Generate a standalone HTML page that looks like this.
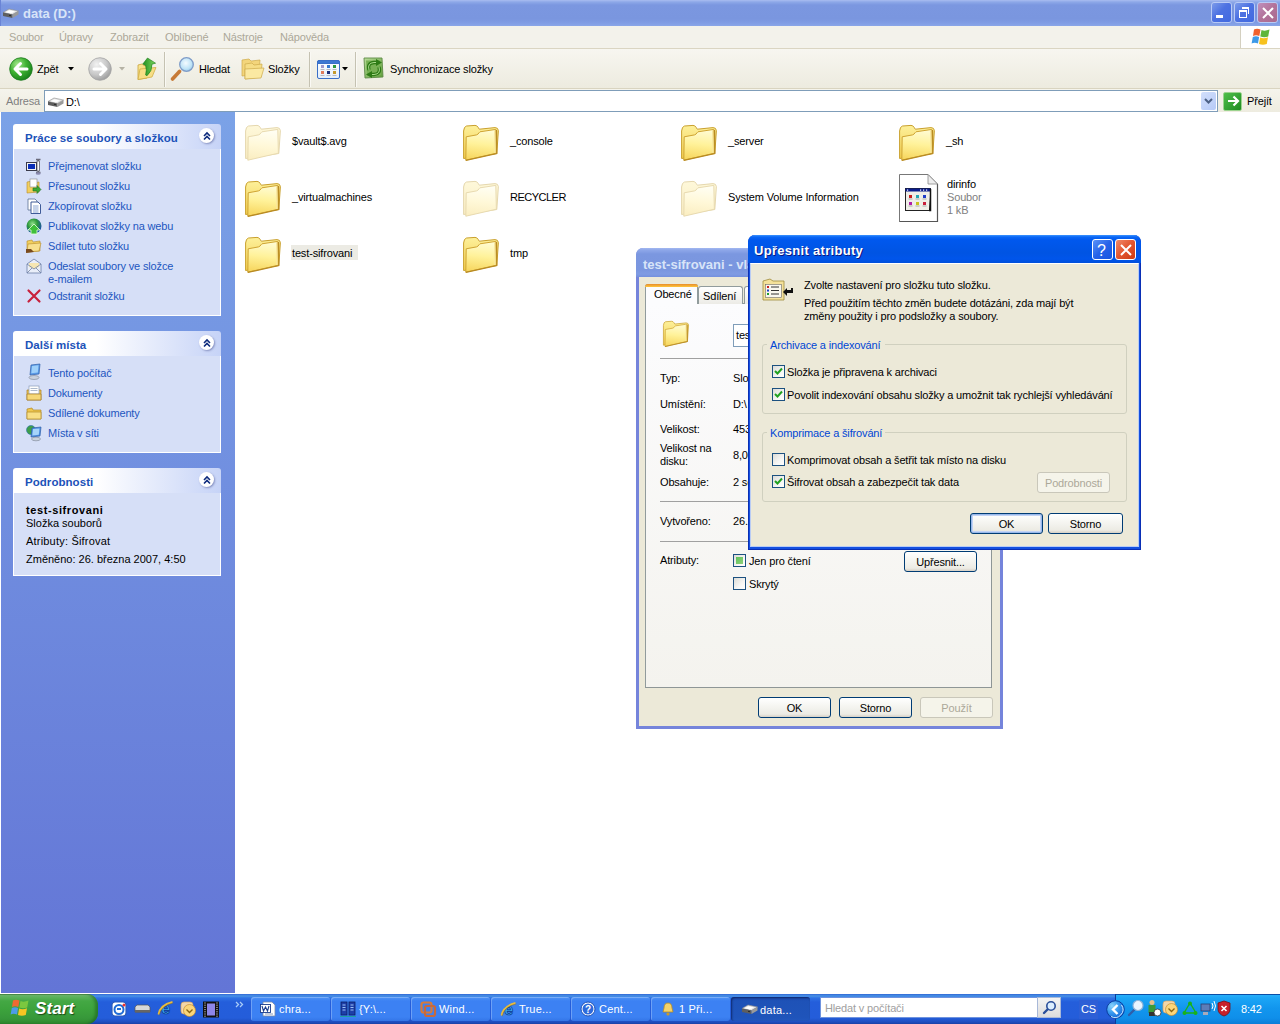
<!DOCTYPE html>
<html><head><meta charset="utf-8">
<style>
*{box-sizing:border-box;margin:0;padding:0}
html,body{width:1280px;height:1024px;overflow:hidden;background:#fff;font-family:"Liberation Sans",sans-serif;font-size:11px;letter-spacing:-0.15px;color:#000}
.a{position:absolute}
.t{position:absolute;white-space:nowrap;line-height:13px}
svg.i{position:absolute;overflow:visible}
#title{left:0;top:0;width:1280px;height:26px;background:linear-gradient(#A9BDF0 0,#8DA8E8 2px,#7B97E0 5px,#7A96DF 19px,#809DE4 23px,#8AA6E8 26px)}
#title .tx{left:23px;top:7px;font-size:13px;font-weight:bold;color:#D8E4F8;letter-spacing:0}
.cb{position:absolute;top:2px;width:21px;height:21px;border:1px solid #B9CBF5;border-radius:3px;background:linear-gradient(135deg,#7C9BEA 0,#4D72E2 45%,#4169E0 100%)}
#menu{left:0;top:26px;width:1280px;height:23px;background:#F3F2EB;border-bottom:1px solid #DAD5C2}
#menu .t{top:5px;color:#ACA899}
#tool{left:0;top:49px;width:1280px;height:40px;background:linear-gradient(#F7F6F0,#EDEBDF);border-bottom:1px solid #D9D4C0}
#addr{left:0;top:89px;width:1280px;height:23px;background:linear-gradient(#F5F4EC,#EEECE0)}
.sep{position:absolute;top:3px;width:2px;height:35px;border-left:1px solid #C5C2B2;border-right:1px solid #FAF9F4}
#side{left:1px;top:112px;width:234px;height:881px;background:linear-gradient(#7BA2E7,#6375D6)}
.panel{position:absolute;left:13px;width:208px;background:#D6DFF7;border:1px solid #fff;border-top:none}
.phead{position:absolute;left:13px;width:208px;height:25px;background:linear-gradient(90deg,#fff 0,#fff 40%,#C6D3F7 100%);border-radius:3px 3px 0 0}
.phead .t{left:12px;top:8px;font-weight:bold;font-size:11.5px;color:#1C52B9;letter-spacing:0.05px}
.chev{position:absolute;left:186px;top:4px;width:15px;height:15px;border-radius:50%;background:#fff;box-shadow:1px 1px 2px rgba(80,90,150,.55)}
.lnk{color:#1D56BF}
.ic{position:absolute;width:16px;height:16px}
#content{left:235px;top:112px;width:1045px;height:882px;background:#fff}
.fname{position:absolute;white-space:nowrap;line-height:13px}
/* dialogs */
.dlg{position:absolute;background:#ECE9D8}
#taskbar{left:0;top:994px;width:1280px;height:30px;background:linear-gradient(#3168D5 0,#4993E6 2px,#2F71E5 4px,#245EDB 8px,#245DDA 24px,#1D4EC0 28px,#1941A5 30px)}
.tbtn{position:absolute;top:997px;height:24px;border-radius:3px;background:linear-gradient(#4F94F6 0,#3C81F3 4px,#3C81F3 20px,#2F6FE0 26px);box-shadow:inset 1px 1px 0 rgba(255,255,255,.25)}
.tbtn .t{color:#fff;top:6px;left:28px;letter-spacing:0.2px}
.btn{position:absolute;height:21px;border:1px solid #003C74;border-radius:3px;background:linear-gradient(#fff 0,#F6F6F2 40%,#ECEBE4 85%,#D6D0C5 100%);text-align:center;line-height:20px}
.chk{position:absolute;width:13px;height:13px;border:1px solid #1C5180;background:linear-gradient(135deg,#DCDCD7 0,#F6F6F4 60%,#fff 100%)}
</style></head><body>

<!-- ============ TITLE BAR ============ -->
<div id="title" class="a">
  <div class="a" style="left:0;top:0;width:1px;height:26px;background:#6A84D6"></div>
  <svg class="i" style="left:2px;top:7px" width="17" height="12" viewBox="0 0 17 12">
    <path d="M1,5.5 L7,2 L16.5,4 L10.5,7.5Z" fill="#E4E4E4" stroke="#8C8C8C" stroke-width=".6"/>
    <path d="M3.5,5.3 L7.5,3.2 L13,4.4 L9,6.6Z" fill="#fff"/>
    <path d="M1,5.5 L10.5,7.5 L10.5,11 L1,9Z" fill="#5E5E5E"/>
    <path d="M10.5,7.5 L16.5,4 L16.5,7.5 L10.5,11Z" fill="#9A9A9A"/>
    <path d="M7,8.3 L9,8.7" stroke="#2A2A2A" stroke-width="1"/>
  </svg>
  <div class="t tx">data (D:)</div>
  <div class="cb" style="left:1211px"><div class="a" style="left:4px;top:12px;width:7px;height:3px;background:#fff"></div></div>
  <div class="cb" style="left:1234px">
    <div class="a" style="left:7px;top:4px;width:7px;height:2px;background:#fff"></div>
    <div class="a" style="left:13px;top:4px;width:1px;height:7px;background:#fff"></div>
    <div class="a" style="left:4px;top:7px;width:8px;height:8px;border:1px solid #fff;border-top-width:2px"></div>
  </div>
  <div class="cb" style="left:1257px;background:linear-gradient(135deg,#C08FBC 0,#B2739A 50%,#A96A8F 100%)">
    <svg class="i" style="left:4px;top:4px" width="12" height="12" viewBox="0 0 12 12"><path d="M1,1 L11,11 M11,1 L1,11" stroke="#fff" stroke-width="2"/></svg>
  </div>
</div>

<!-- ============ MENU ============ -->
<div id="menu" class="a">
  <div class="t" style="left:9px">Soubor</div>
  <div class="t" style="left:59px">Úpravy</div>
  <div class="t" style="left:110px">Zobrazit</div>
  <div class="t" style="left:165px">Oblíbené</div>
  <div class="t" style="left:223px">Nástroje</div>
  <div class="t" style="left:280px">Nápověda</div>
  <div class="a" style="left:1240px;top:0;width:1px;height:22px;background:#D4D0C0"></div>
  <div class="a" style="left:1241px;top:0;width:39px;height:22px;background:#fff"></div>
  <svg class="i" style="left:1251px;top:2px" width="20" height="18" viewBox="0 0 20 18">
    <path d="M3,1.5 Q6,0 9.5,1.5 L8.3,8 Q5,6.5 2,8 Z" fill="#F0612D"/>
    <path d="M10.5,2 Q14,3.5 18.5,1.5 L17.2,8.5 Q13.5,10 9.3,8.5 Z" fill="#5FB63A"/>
    <path d="M1.8,9 Q5,7.5 8.1,9 L7,15.5 Q3.5,14 0.6,15.5 Z" fill="#3D9AE8"/>
    <path d="M9.1,9.5 Q13,11 17,9.2 L15.8,16 Q12,17.5 8,16 Z" fill="#F7C21E"/>
  </svg>
</div>

<!-- ============ TOOLBAR ============ -->
<div id="tool" class="a">
  <!-- back -->
  <svg class="i" style="left:9px;top:8px" width="24" height="24" viewBox="0 0 24 24">
    <defs><radialGradient id="gb" cx="35%" cy="30%" r="75%"><stop offset="0" stop-color="#A6E88E"/><stop offset=".5" stop-color="#3FB232"/><stop offset="1" stop-color="#17801A"/></radialGradient>
    <radialGradient id="gg" cx="35%" cy="30%" r="75%"><stop offset="0" stop-color="#F2F2F2"/><stop offset=".6" stop-color="#C8C8C8"/><stop offset="1" stop-color="#9C9C9C"/></radialGradient></defs>
    <circle cx="12" cy="12" r="11.3" fill="url(#gb)" stroke="#1C7A1E" stroke-width=".8"/>
    <path d="M6,12 L11.5,6.5 M6,12 L11.5,17.5 M6.5,12 L18,12" stroke="#fff" stroke-width="3" stroke-linecap="round"/>
  </svg>
  <div class="t" style="left:37px;top:14px">Zpět</div>
  <svg class="i" style="left:68px;top:18px" width="7" height="4"><path d="M0,0 L6,0 L3,3.5Z" fill="#000"/></svg>
  <!-- forward -->
  <svg class="i" style="left:88px;top:8px" width="24" height="24" viewBox="0 0 24 24">
    <circle cx="12" cy="12" r="11.3" fill="url(#gg)" stroke="#A5A5A5" stroke-width=".8"/>
    <path d="M18,12 L12.5,6.5 M18,12 L12.5,17.5 M17.5,12 L6,12" stroke="#fff" stroke-width="3" stroke-linecap="round"/>
  </svg>
  <svg class="i" style="left:119px;top:18px" width="7" height="4"><path d="M0,0 L6,0 L3,3.5Z" fill="#B5B2A5"/></svg>
  <!-- up -->
  <svg class="i" style="left:136px;top:8px" width="22" height="25" viewBox="0 0 22 25">
    <defs><linearGradient id="upf" x1="0" y1="0" x2="1" y2="1"><stop offset="0" stop-color="#FBEA9C"/><stop offset="1" stop-color="#EFC958"/></linearGradient>
    <linearGradient id="upa" x1="0" y1="0" x2="1" y2="0"><stop offset="0" stop-color="#1E8E1E"/><stop offset="1" stop-color="#7FD860"/></linearGradient></defs>
    <path d="M2,8 L6,7 L8,8.5 L12,8 L11,21 L2,22.5Z" fill="url(#upf)" stroke="#C9A23A" stroke-width=".8"/>
    <path d="M4,12 L20,10.5 L16,20 L2,22.5Z" fill="#F7DE86" stroke="#D2AE48" stroke-width=".8"/>
    <path d="M11.5,1 L19.6,6.2 L16,7.2 Q16.3,14 11,18.8 L9.6,18 Q11,13 9.6,8.4 L6.8,7Z" fill="url(#upa)" stroke="#1A7A1A" stroke-width=".6"/>
  </svg>
  <div class="sep" style="left:164px"></div>
  <!-- search -->
  <svg class="i" style="left:170px;top:8px" width="25" height="24" viewBox="0 0 25 24">
    <defs><linearGradient id="mh" x1="0" y1="0" x2="1" y2="0"><stop offset="0" stop-color="#E2A561"/><stop offset="1" stop-color="#C0702C"/></linearGradient>
    <radialGradient id="ml" cx="45%" cy="40%" r="60%"><stop offset="0" stop-color="#F4FBFF"/><stop offset=".7" stop-color="#BFE4F7"/><stop offset="1" stop-color="#9CCBE8"/></radialGradient></defs>
    <path d="M2.5,22 L9.5,14.5" stroke="#C77A36" stroke-width="3.6" stroke-linecap="round"/>
    <circle cx="16.5" cy="7.5" r="6.8" fill="url(#ml)" stroke="#7F9CC8" stroke-width="1.3"/>
  </svg>
  <div class="t" style="left:199px;top:14px">Hledat</div>
  <!-- folders -->
  <svg class="i" style="left:241px;top:9px" width="24" height="22" viewBox="0 0 24 22">
    <path d="M1,2 L8,1 L10,3 L19,2 L18,16 L1,18Z" fill="#F3D57B" stroke="#CDAA4A" stroke-width=".7"/>
    <path d="M4,6 L11,5 L13,7 L21,6 L20,19 L4,21Z" fill="#F6DD85" stroke="#CDAA4A" stroke-width=".7"/>
    <path d="M4,11 L23,10 L20,20 L4,21Z" fill="#FBE9A2" stroke="#CDAA4A" stroke-width=".7"/>
  </svg>
  <div class="t" style="left:268px;top:14px">Složky</div>
  <div class="sep" style="left:309px"></div>
  <!-- views -->
  <svg class="i" style="left:317px;top:11px" width="23" height="19" viewBox="0 0 23 19">
    <defs><linearGradient id="vw" x1="0" y1="0" x2="0" y2="1"><stop offset="0" stop-color="#FFFFFF"/><stop offset="1" stop-color="#E3EEFB"/></linearGradient></defs>
    <rect x=".5" y=".5" width="22" height="18" rx="1.5" fill="url(#vw)" stroke="#3A6FC8"/>
    <path d="M.5,3.5 L.5,2 Q.5,.5 2,.5 L21,.5 Q22.5,.5 22.5,2 L22.5,3.5Z" fill="#3D78D2" stroke="#3A6FC8"/>
    <rect x="4" y="5" width="3" height="3" fill="#A29ACB"/><rect x="10" y="5" width="3" height="3" fill="#3478D0"/><rect x="16" y="5" width="3" height="3" fill="#2E9A3E"/>
    <rect x="4" y="11" width="3" height="3" fill="#E07B5B"/><rect x="10" y="11" width="3" height="3" fill="#1C2F7A"/><rect x="16" y="11" width="3" height="3" fill="#C49A2E"/>
    <path d="M3.5,9.5 L7.5,9.5 M9.5,9.5 L13.5,9.5 M15.5,9.5 L19.5,9.5 M3.5,15.5 L7.5,15.5 M9.5,15.5 L13.5,15.5 M15.5,15.5 L19.5,15.5" stroke="#B8B8C0" stroke-width="1"/>
  </svg>
  <svg class="i" style="left:342px;top:18px" width="7" height="4"><path d="M0,0 L6,0 L3,3.5Z" fill="#000"/></svg>
  <div class="sep" style="left:355px"></div>
  <!-- sync -->
  <svg class="i" style="left:362px;top:8px" width="24" height="23" viewBox="0 0 24 23">
    <defs><linearGradient id="sy" x1="0" y1="0" x2="1" y2="1"><stop offset="0" stop-color="#B9DC9A"/><stop offset="1" stop-color="#5E9E3A"/></linearGradient></defs>
    <path d="M2,1 L20,1 L21,20 L3,21Z" fill="url(#sy)" stroke="#5D8A46" stroke-width=".9"/>
    <path d="M4,3.5 L18,3.5 L19,18 L5,19Z" fill="#78B054"/>
    <path d="M7,13 Q5,6 12,5.5 L15,5.5" stroke="#2E7A16" stroke-width="3.4" fill="none"/>
    <path d="M17,10 Q19,17 12,17.5 L9,17.5" stroke="#2E7A16" stroke-width="3.4" fill="none"/>
    <path d="M7,13 Q5,6 12,5.5 L15,5.5 M17,10 Q19,17 12,17.5 L9,17.5" stroke="#A9D98A" stroke-width="1" fill="none"/>
    <path d="M14,2 L20,5.5 L14,9Z M10,14 L4,17.5 L10,21Z" fill="#2E7A16"/>
  </svg>
  <div class="t" style="left:390px;top:14px">Synchronizace složky</div>
</div>

<!-- ============ ADDRESS ============ -->
<div id="addr" class="a">
  <div class="t" style="left:6px;top:6px;color:#7F7F7F">Adresa</div>
  <div class="a" style="left:44px;top:1px;width:1174px;height:22px;background:#fff;border:1px solid #7F9DB9"></div>
  <svg class="i" style="left:47px;top:7px" width="17" height="12" viewBox="0 0 17 12">
    <path d="M1,5.5 L7,2 L16.5,4 L10.5,7.5Z" fill="#E4E4E4" stroke="#8C8C8C" stroke-width=".6"/>
    <path d="M3.5,5.3 L7.5,3.2 L13,4.4 L9,6.6Z" fill="#fff"/>
    <path d="M1,5.5 L10.5,7.5 L10.5,11 L1,9Z" fill="#5E5E5E"/>
    <path d="M10.5,7.5 L16.5,4 L16.5,7.5 L10.5,11Z" fill="#9A9A9A"/>
    <path d="M7,8.3 L9,8.7" stroke="#2A2A2A" stroke-width="1"/>
  </svg>
  <div class="t" style="left:66px;top:7px">D:\</div>
  <div class="a" style="left:1201px;top:3px;width:15px;height:18px;border-radius:2px;background:linear-gradient(135deg,#D2DFFB,#B6CAF7)"></div>
  <svg class="i" style="left:1204px;top:9px" width="9" height="6"><path d="M1,1 L4.5,4.5 L8,1" stroke="#4D6185" stroke-width="2" fill="none"/></svg>
  <div class="a" style="left:1223px;top:3px;width:19px;height:19px;border-radius:2px;background:linear-gradient(135deg,#4FBF4A,#1F8B22);border:1px solid #9CD38F"></div>
  <svg class="i" style="left:1227px;top:6px" width="13" height="12"><path d="M1,6 L11,6 M6.5,1.5 L11,6 L6.5,10.5" stroke="#fff" stroke-width="2.2" fill="none"/></svg>
  <div class="t" style="left:1247px;top:6px">Přejít</div>
</div>

<!-- ============ SIDEBAR ============ -->
<div id="side" class="a"></div>
<!-- panel 1 -->
<div class="phead" style="top:124px"><div class="t">Práce se soubory a složkou</div><div class="chev"></div>
  <svg class="i" style="left:190px;top:8px" width="8" height="8"><path d="M1,4 L4,1 L7,4 M1,7.5 L4,4.5 L7,7.5" stroke="#0C2A7C" stroke-width="1.6" fill="none"/></svg></div>
<div class="panel" style="top:149px;height:167px"></div>
<svg class="i" style="left:26px;top:158px" width="16" height="17" viewBox="0 0 16 17">
  <rect x=".5" y="4.5" width="10" height="8" fill="#F4F4F4" stroke="#3A3A4A"/><rect x="2" y="6" width="7" height="5" fill="#0A2EB8"/>
  <path d="M10,1.5 L14.5,1.5 M12.2,1.5 L12.2,14.5 M10,14.5 L14.5,14.5" stroke="#6A6A7A" stroke-width="1.3"/>
  <rect x="11" y="3" width="2.6" height="10" fill="#FAFAFA" stroke="#4A4A5A" stroke-width=".7"/>
  <ellipse cx="12.2" cy="15.5" rx="2.5" ry="1.2" fill="#8A8AB0"/>
</svg>
<div class="t lnk" style="left:48px;top:160px">Přejmenovat složku</div>
<svg class="i" style="left:26px;top:178px" width="16" height="16" viewBox="0 0 16 16">
  <path d="M1,4 L6,3 L7,5 L13,4 L13,14 L1,15Z" fill="#F2CF5E" stroke="#B68C2A" stroke-width=".6"/>
  <rect x="4" y="1" width="7" height="8" fill="#fff" stroke="#888" stroke-width=".6"/>
  <path d="M7,10 L11,10 L11,7.5 L15,11.5 L11,15.5 L11,13 L7,13Z" fill="#3BAA35" stroke="#1E7020" stroke-width=".6"/>
</svg>
<div class="t lnk" style="left:48px;top:180px">Přesunout složku</div>
<svg class="i" style="left:26px;top:198px" width="16" height="16" viewBox="0 0 16 16">
  <path d="M2,1 L9,1 L11,3 L11,12 L2,12Z" fill="#fff" stroke="#5A6E93" stroke-width=".8"/>
  <path d="M5,4 L12,4 L14.5,6.5 L14.5,15.5 L5,15.5Z" fill="#FFFFFF" stroke="#2B4A8C" stroke-width=".9"/>
  <path d="M7,8 L12.5,8 M7,10 L12.5,10 M7,12 L12.5,12 M7,14 L12.5,14" stroke="#6F8FC8" stroke-width=".8"/>
</svg>
<div class="t lnk" style="left:48px;top:200px">Zkopírovat složku</div>
<svg class="i" style="left:26px;top:218px" width="16" height="16" viewBox="0 0 16 16">
  <defs><radialGradient id="globe" cx="40%" cy="35%" r="65%"><stop offset="0" stop-color="#8FE08A"/><stop offset=".5" stop-color="#2F9A3A"/><stop offset="1" stop-color="#1A4FA8"/></radialGradient></defs>
  <circle cx="8" cy="8" r="7.5" fill="url(#globe)"/>
  <path d="M8,6 L14,12 L11,12 L11,16 L5,16 L5,12 L2,12Z" fill="#3FBF3A" stroke="#E8FFE0" stroke-width=".8"/>
</svg>
<div class="t lnk" style="left:48px;top:220px">Publikovat složky na webu</div>
<svg class="i" style="left:26px;top:238px" width="16" height="16" viewBox="0 0 16 16">
  <path d="M1,3 L6,2 L7,4 L14,3 L14,13 L1,14Z" fill="#F2CF5E" stroke="#B68C2A" stroke-width=".6"/>
  <path d="M2,6 L15,5 L13,13 L1,14Z" fill="#F8E08E" stroke="#B68C2A" stroke-width=".6"/>
  <path d="M0,11 L5,11 L8,14 L0,15Z" fill="#7A4B1E"/>
</svg>
<div class="t lnk" style="left:48px;top:240px">Sdílet tuto složku</div>
<svg class="i" style="left:26px;top:258px" width="16" height="16" viewBox="0 0 16 16">
  <path d="M1,6 L8,1 L15,6 L15,15 L1,15Z" fill="#E9EEF9" stroke="#6C7DA6" stroke-width=".8"/>
  <path d="M3,5 L13,5 L13,9 L8,11 L3,9Z" fill="#F6E6B2"/>
  <path d="M1,6 L8,11 L15,6 M1,15 L6,10 M15,15 L10,10" stroke="#6C7DA6" stroke-width=".8" fill="none"/>
</svg>
<div class="t lnk" style="left:48px;top:260px">Odeslat soubory ve složce</div>
<div class="t lnk" style="left:48px;top:273px">e-mailem</div>
<svg class="i" style="left:26px;top:288px" width="16" height="16" viewBox="0 0 16 16">
  <path d="M2.5,2.5 L13.5,13.5 M13.5,2.5 L2.5,13.5" stroke="#C8213C" stroke-width="2.2" stroke-linecap="round"/>
</svg>
<div class="t lnk" style="left:48px;top:290px">Odstranit složku</div>

<!-- panel 2 -->
<div class="phead" style="top:331px"><div class="t">Další místa</div><div class="chev"></div>
  <svg class="i" style="left:190px;top:8px" width="8" height="8"><path d="M1,4 L4,1 L7,4 M1,7.5 L4,4.5 L7,7.5" stroke="#0C2A7C" stroke-width="1.6" fill="none"/></svg></div>
<div class="panel" style="top:356px;height:97px"></div>
<svg class="i" style="left:26px;top:364px" width="16" height="16" viewBox="0 0 16 16">
  <path d="M5,1 L14,0 L13,10 L4,11Z" fill="#5A9BE8" stroke="#2F5EA8" stroke-width=".7"/>
  <path d="M6,2 L12.5,1.3 L11.8,8.5 L5.3,9.2Z" fill="#9ED0FA"/>
  <ellipse cx="8" cy="13.5" rx="5" ry="2" fill="#C9D1DE" stroke="#7A8595" stroke-width=".6"/>
</svg>
<div class="t lnk" style="left:48px;top:367px">Tento počítač</div>
<svg class="i" style="left:26px;top:385px" width="16" height="16" viewBox="0 0 16 16">
  <path d="M1,5 L15,5 L15,15 L1,15Z" fill="#F0C756" stroke="#A77B22" stroke-width=".7"/>
  <rect x="3" y="1" width="10" height="8" fill="#fff" stroke="#8A9CB8" stroke-width=".7"/>
  <path d="M4.5,3.5 L11.5,3.5 M4.5,5.5 L11.5,5.5" stroke="#8A9CB8" stroke-width=".7"/>
  <path d="M1,9 L15,9 L15,15 L1,15Z" fill="#F6D878" stroke="#A77B22" stroke-width=".7"/>
</svg>
<div class="t lnk" style="left:48px;top:387px">Dokumenty</div>
<svg class="i" style="left:26px;top:405px" width="16" height="16" viewBox="0 0 16 16">
  <path d="M1,4 L6,3 L7,5 L15,5 L15,14 L1,14Z" fill="#EFC74F" stroke="#B38A25" stroke-width=".7"/>
  <path d="M1,7 L15,7 L15,14 L1,14Z" fill="#F8DF86" stroke="#B38A25" stroke-width=".7"/>
</svg>
<div class="t lnk" style="left:48px;top:407px">Sdílené dokumenty</div>
<svg class="i" style="left:26px;top:425px" width="16" height="16" viewBox="0 0 16 16">
  <circle cx="5" cy="5" r="4.5" fill="#3E9E4A" stroke="#2C6FB0" stroke-width=".6"/>
  <path d="M6,3 L15,2 L14,11 L5,12Z" fill="#4C8DE0" stroke="#2F5EA8" stroke-width=".7"/>
  <path d="M7,4 L13.5,3.4 L12.8,9.8 L6.3,10.4Z" fill="#A6D4FA"/>
  <ellipse cx="10" cy="14" rx="4.5" ry="1.8" fill="#C9D1DE" stroke="#7A8595" stroke-width=".6"/>
</svg>
<div class="t lnk" style="left:48px;top:427px">Místa v síti</div>

<!-- panel 3 -->
<div class="phead" style="top:468px"><div class="t">Podrobnosti</div><div class="chev"></div>
  <svg class="i" style="left:190px;top:8px" width="8" height="8"><path d="M1,4 L4,1 L7,4 M1,7.5 L4,4.5 L7,7.5" stroke="#0C2A7C" stroke-width="1.6" fill="none"/></svg></div>
<div class="panel" style="top:493px;height:83px"></div>
<div class="t" style="left:26px;top:504px;font-weight:bold;letter-spacing:0.6px">test-sifrovani</div>
<div class="t" style="left:26px;top:517px;letter-spacing:0px">Složka souborů</div>
<div class="t" style="left:26px;top:535px;letter-spacing:0.2px">Atributy: Šifrovat</div>
<div class="t" style="left:26px;top:553px;letter-spacing:0px">Změněno: 26. března 2007, 4:50</div>

<!-- content placeholder -->
<div id="content" class="a"></div>
<svg width="0" height="0" style="position:absolute">
  <defs>
    <linearGradient id="fback" x1="0" y1="0" x2="0" y2="1"><stop offset="0" stop-color="#FDF09A"/><stop offset="1" stop-color="#F2CE50"/></linearGradient>
    <linearGradient id="ffront" x1=".2" y1="0" x2=".1" y2="1"><stop offset="0" stop-color="#FFFBD0"/><stop offset=".45" stop-color="#FFF29A"/><stop offset="1" stop-color="#F6D45A"/></linearGradient>
    <linearGradient id="gback" x1="0" y1="0" x2="0" y2="1"><stop offset="0" stop-color="#FEF8DA"/><stop offset="1" stop-color="#F9EDC2"/></linearGradient>
    <linearGradient id="gfront" x1=".2" y1="0" x2=".1" y2="1"><stop offset="0" stop-color="#FFFEF2"/><stop offset=".5" stop-color="#FFF8D8"/><stop offset="1" stop-color="#FAEDC0"/></linearGradient>
    <g id="folder">
      <path d="M0.6,33.5 L0.6,6 Q1,1.5 3.5,1 L12,0.4 Q14,0.4 15,2.2 L16.3,4.2 L32,2.6 Q35,2.6 35.4,5.5 L33.8,28.5 Z" fill="url(#fback)" stroke="#C9A02E" stroke-width="1"/>
      <path d="M3.2,11.8 L13.5,9.9 Q15.2,9.4 16,7.8 L17,6.8 L32.8,4.4 L33.4,28.2 L2.8,35.2 Z" fill="url(#ffront)" stroke="#CFA432" stroke-width="1"/>
      <path d="M31.5,5 L31.8,28" stroke="#F9E7A0" stroke-width="1"/>
      <path d="M33.6,5 L33.8,28.5 L2.8,35.4" stroke="#B88A22" stroke-width="1.2" fill="none"/>
    </g>
    <g id="gfolder">
      <path d="M0.6,33.5 L0.6,6 Q1,1.5 3.5,1 L12,0.4 Q14,0.4 15,2.2 L16.3,4.2 L32,2.6 Q35,2.6 35.4,5.5 L33.8,28.5 Z" fill="url(#gback)" stroke="#E5D7AE" stroke-width="1"/>
      <path d="M3.2,11.8 L13.5,9.9 Q15.2,9.4 16,7.8 L17,6.8 L32.8,4.4 L33.4,28.2 L2.8,35.2 Z" fill="url(#gfront)" stroke="#E8DAB0" stroke-width="1"/>
    </g>
  </defs>
</svg>
<svg class="i" style="left:245px;top:125px" width="36" height="36"><use href="#gfolder"/></svg>
<div class="fname" style="left:292px;top:135px">$vault$.avg</div>
<svg class="i" style="left:463px;top:125px" width="36" height="36"><use href="#folder"/></svg>
<div class="fname" style="left:510px;top:135px">_console</div>
<svg class="i" style="left:681px;top:125px" width="36" height="36"><use href="#folder"/></svg>
<div class="fname" style="left:728px;top:135px">_server</div>
<svg class="i" style="left:899px;top:125px" width="36" height="36"><use href="#folder"/></svg>
<div class="fname" style="left:946px;top:135px">_sh</div>

<svg class="i" style="left:245px;top:181px" width="36" height="36"><use href="#folder"/></svg>
<div class="fname" style="left:292px;top:191px">_virtualmachines</div>
<svg class="i" style="left:463px;top:181px" width="36" height="36"><use href="#gfolder"/></svg>
<div class="fname" style="left:510px;top:191px;letter-spacing:-0.5px">RECYCLER</div>
<svg class="i" style="left:681px;top:181px" width="36" height="36"><use href="#gfolder"/></svg>
<div class="fname" style="left:728px;top:191px">System Volume Information</div>
<!-- dirinfo -->
<svg class="i" style="left:899px;top:174px" width="40" height="48" viewBox="0 0 40 48">
  <path d="M0.5,0.5 L29,0.5 L38.5,10 L38.5,47.5 L0.5,47.5Z" fill="#fff" stroke="#777" stroke-width="1"/>
  <path d="M38.5,10 L38.5,47.5 L0.5,47.5" stroke="#555" stroke-width="1.2" fill="none"/>
  <path d="M29,0.5 L29,10 L38.5,10Z" fill="#EDEDED" stroke="#888" stroke-width=".8"/>
  <rect x="6.5" y="14.5" width="25" height="22" fill="#EFEEE8" stroke="#222" stroke-width="1"/>
  <rect x="6.5" y="14.5" width="25" height="3" fill="#0A1C8C"/>
  <path d="M30,36.5 L31.5,36.5 L31.5,15" stroke="#111" stroke-width="1.5"/>
  <rect x="10" y="21" width="3" height="3" fill="#C81E1E"/><rect x="17" y="21" width="3" height="3" fill="#22A6B4"/><rect x="24" y="21" width="3" height="3" fill="#1E3CC8"/>
  <rect x="10" y="28" width="3" height="3" fill="#B21EA8"/><rect x="17" y="28" width="3" height="3" fill="#C8C21E"/><rect x="24" y="28" width="3" height="3" fill="#C81E3A"/><rect x="8" y="15.5" width="1.2" height="1.2" fill="#fff"/><rect x="21" y="15.5" width="1.2" height="1.2" fill="#fff"/><rect x="24" y="15.5" width="1.2" height="1.2" fill="#fff"/><rect x="27" y="15.5" width="1.2" height="1.2" fill="#fff"/><path d="M9.5,25 L13.5,25 M16.5,25 L20.5,25 M23.5,25 L27.5,25 M9.5,32 L13.5,32 M16.5,32 L20.5,32 M23.5,32 L27.5,32" stroke="#9A9A9A" stroke-width=".8"/>
</svg>
<div class="fname" style="left:947px;top:178px">dirinfo</div>
<div class="fname" style="left:947px;top:191px;color:#808080">Soubor</div>
<div class="fname" style="left:947px;top:204px;color:#808080">1 kB</div>

<svg class="i" style="left:245px;top:237px" width="36" height="36"><use href="#folder"/></svg>
<div class="a" style="left:291px;top:245px;width:67px;height:15px;background:#ECEBE4"></div>
<div class="fname" style="left:292px;top:247px">test-sifrovani</div>
<svg class="i" style="left:463px;top:237px" width="36" height="36"><use href="#folder"/></svg>
<div class="fname" style="left:510px;top:247px">tmp</div>

<!-- ============ PROPERTIES DIALOG (inactive) ============ -->
<div class="a" style="left:636px;top:248px;width:367px;height:481px;border-radius:7px 7px 0 0;background:#7584DB"></div>
<div class="a" style="left:636px;top:248px;width:367px;height:29px;border-radius:7px 7px 0 0;background:linear-gradient(#A3B8F0 0,#8EA7E9 2px,#7B97E0 6px,#7A96DF 22px,#7F9BE3 26px,#7490DD 29px)"></div>
<div class="t" style="left:643px;top:258px;font-size:13px;font-weight:bold;color:#D8E4F8;letter-spacing:0">test-sifrovani - vlastnosti</div>
<div class="a" style="left:639px;top:277px;width:361px;height:449px;background:#ECE9D8"></div>
<!-- tab page -->
<div class="a" style="left:645px;top:303px;width:347px;height:385px;border:1px solid #919B9C;border-right-color:#8E9696;border-bottom-color:#8E9696;background:linear-gradient(#FCFCFE,#F4F3EE)"></div>
<!-- tabs -->
<div class="a" style="left:698px;top:286px;width:45px;height:18px;border:1px solid #919B9C;border-bottom:none;border-radius:3px 3px 0 0;background:linear-gradient(#FFFFFF,#ECEBE6)"></div>
<div class="t" style="left:703px;top:290px">Sdílení</div>
<div class="a" style="left:744px;top:286px;width:10px;height:18px;border:1px solid #919B9C;border-bottom:none;border-radius:3px 0 0 0;background:linear-gradient(#FFFFFF,#ECEBE6)"></div>
<div class="a" style="left:645px;top:284px;width:53px;height:20px;border:1px solid #919B9C;border-bottom:none;border-radius:3px 3px 0 0;background:#FCFCFE"></div>
<div class="a" style="left:645px;top:284px;width:53px;height:3px;border-radius:3px 3px 0 0;background:linear-gradient(#E68B2C,#FFC73C)"></div>
<div class="t" style="left:654px;top:288px">Obecné</div>
<!-- folder icon -->
<svg class="i" style="left:663px;top:321px" width="26" height="26" viewBox="0 0 36 36"><use href="#folder"/></svg>
<div class="a" style="left:733px;top:324px;width:200px;height:23px;border:1px solid #7F9DB9;background:#fff"></div>
<div class="t" style="left:736px;top:329px">test-sifrovani</div>
<div class="a" style="left:660px;top:358px;width:316px;height:1px;background:#A0A0A0"></div>
<div class="t" style="left:660px;top:372px">Typ:</div><div class="t" style="left:733px;top:372px">Složka souborů</div>
<div class="t" style="left:660px;top:398px">Umístění:</div><div class="t" style="left:733px;top:398px">D:\</div>
<div class="t" style="left:660px;top:423px">Velikost:</div><div class="t" style="left:733px;top:423px">453 bajtů</div>
<div class="t" style="left:660px;top:442px">Velikost na</div><div class="t" style="left:660px;top:455px">disku:</div><div class="t" style="left:733px;top:449px">8,00 kB</div>
<div class="t" style="left:660px;top:476px">Obsahuje:</div><div class="t" style="left:733px;top:476px">2 soubory</div>
<div class="a" style="left:660px;top:501px;width:316px;height:1px;background:#A0A0A0"></div>
<div class="t" style="left:660px;top:515px">Vytvořeno:</div><div class="t" style="left:733px;top:515px">26. března 2007</div>
<div class="a" style="left:660px;top:541px;width:316px;height:1px;background:#A0A0A0"></div>
<div class="t" style="left:660px;top:554px">Atributy:</div>
<div class="chk" style="left:733px;top:554px"><div class="a" style="left:2px;top:2px;width:7px;height:7px;background:linear-gradient(135deg,#5FC45A,#8FD07A)"></div></div>
<div class="t" style="left:749px;top:555px">Jen pro čtení</div>
<div class="chk" style="left:733px;top:577px"></div>
<div class="t" style="left:749px;top:578px">Skrytý</div>
<div class="btn" style="left:904px;top:551px;width:73px">Upřesnit...</div>
<div class="btn" style="left:758px;top:697px;width:73px">OK</div>
<div class="btn" style="left:839px;top:697px;width:73px">Storno</div>
<div class="btn" style="left:920px;top:697px;width:73px;border-color:#C9C7BA;color:#ACA899;background:#F5F4EA">Použít</div>

<!-- ============ ATTRIBUTES DIALOG (active) ============ -->
<div class="a" style="left:748px;top:235px;width:393px;height:315px;border-radius:7px 7px 0 0;background:#1450E0;border:1px solid #0A2FB5;border-top:none"></div>
<div class="a" style="left:748px;top:235px;width:393px;height:28px;border-radius:7px 7px 0 0;background:linear-gradient(#3D95FF 0,#0A66F5 2px,#0058EE 5px,#0054E3 18px,#0055EB 24px,#0050DB 28px)"></div>
<div class="t" style="left:754px;top:244px;font-size:13px;font-weight:bold;color:#fff;letter-spacing:0.3px;text-shadow:1px 1px #0A1883">Upřesnit atributy</div>
<div class="cb" style="left:1092px;top:239px;width:21px;height:21px;border-color:#fff;background:linear-gradient(135deg,#5A93F8 0,#2662E8 50%,#1A55E0 100%)">
  <div class="t" style="left:4px;top:3px;font-size:16px;line-height:16px;color:#fff;font-weight:normal">?</div>
</div>
<div class="cb" style="left:1115px;top:239px;width:21px;height:21px;border-color:#fff;background:linear-gradient(135deg,#F08A6A 0,#E2552F 50%,#CC3A12 100%)">
  <svg class="i" style="left:4px;top:4px" width="12" height="12" viewBox="0 0 12 12"><path d="M1,1 L11,11 M11,1 L1,11" stroke="#fff" stroke-width="2"/></svg>
</div>
<div class="a" style="left:750px;top:263px;width:389px;height:284px;background:#ECE9D8;border:1px solid #B9CCF4;border-top-color:#fff"></div>
<svg class="i" style="left:762px;top:278px" width="32" height="24" viewBox="0 0 32 24">
  <path d="M1,3 L8,1 L11,3 L22,3 L22,22 L1,22Z" fill="#F4E19A" stroke="#9E8A3C" stroke-width=".8"/>
  <rect x="3.5" y="6.5" width="16" height="13" fill="#F9F7EE" stroke="#6B6B6B" stroke-width=".6"/>
  <rect x="5" y="8" width="2" height="2" fill="#C8201E"/><rect x="5" y="11.5" width="2" height="2" fill="#1E40C8"/><rect x="5" y="15" width="2" height="2" fill="#1E9E2E"/>
  <path d="M9,9 L17,9 M9,12.5 L17,12.5 M9,16 L17,16" stroke="#333" stroke-width="1"/>
  <path d="M31,10 L31,15 L25,15 L25,18 L21,14 L25,10 L25,12 L29,12 L29,10Z" fill="#111"/>
</svg>
<div class="t" style="left:804px;top:279px">Zvolte nastavení pro složku tuto složku.</div>
<div class="t" style="left:804px;top:297px">Před použitím těchto změn budete dotázáni, zda mají být</div>
<div class="t" style="left:804px;top:310px">změny použity i pro podsložky a soubory.</div>
<!-- group 1 -->
<div class="a" style="left:762px;top:344px;width:365px;height:70px;border:1px solid #D0D0BF;border-radius:3px"></div>
<div class="a" style="left:767px;top:338px;width:118px;height:12px;background:#ECE9D8"></div>
<div class="t" style="left:770px;top:339px;color:#0046D5">Archivace a indexování</div>
<div class="chk" style="left:772px;top:365px"></div>
<svg class="i" style="left:774px;top:367px" width="9" height="9"><path d="M1,4 L3.5,6.5 L8,1.5" stroke="#21A121" stroke-width="2" fill="none"/></svg>
<div class="t" style="left:787px;top:366px">Složka je připravena k archivaci</div>
<div class="chk" style="left:772px;top:388px"></div>
<svg class="i" style="left:774px;top:390px" width="9" height="9"><path d="M1,4 L3.5,6.5 L8,1.5" stroke="#21A121" stroke-width="2" fill="none"/></svg>
<div class="t" style="left:787px;top:389px">Povolit indexování obsahu složky a umožnit tak rychlejší vyhledávání</div>
<!-- group 2 -->
<div class="a" style="left:762px;top:432px;width:365px;height:70px;border:1px solid #D0D0BF;border-radius:3px"></div>
<div class="a" style="left:767px;top:426px;width:118px;height:12px;background:#ECE9D8"></div>
<div class="t" style="left:770px;top:427px;color:#0046D5">Komprimace a šifrování</div>
<div class="chk" style="left:772px;top:453px"></div>
<div class="t" style="left:787px;top:454px">Komprimovat obsah a šetřit tak místo na disku</div>
<div class="chk" style="left:772px;top:475px"></div>
<svg class="i" style="left:774px;top:477px" width="9" height="9"><path d="M1,4 L3.5,6.5 L8,1.5" stroke="#21A121" stroke-width="2" fill="none"/></svg>
<div class="t" style="left:787px;top:476px">Šifrovat obsah a zabezpečit tak data</div>
<div class="btn" style="left:1037px;top:472px;width:73px;border-color:#C9C7BA;color:#ACA899;background:#F5F4EA">Podrobnosti</div>
<div class="btn" style="left:970px;top:513px;width:73px;box-shadow:inset 0 0 0 1px #98B8EA,inset 0 0 0 2px #C2D3F5">OK</div>
<div class="btn" style="left:1048px;top:513px;width:75px">Storno</div>

<!-- ============ TASKBAR ============ -->
<div id="taskbar" class="a"></div>
<!-- start -->
<div class="a" style="left:0;top:994px;width:98px;height:30px;border-radius:0 11px 11px 0;background:linear-gradient(#2F6F2F 0,#72BD72 1px,#5CB25C 3px,#44A844 7px,#3CA23C 16px,#37983A 24px,#2E8A30 30px);box-shadow:inset -3px 0 3px rgba(20,80,20,.45)"></div>
<svg class="i" style="left:10px;top:999px" width="20" height="18" viewBox="0 0 20 18">
  <path d="M3,1.5 Q6,0 9.5,1.5 L8.3,8 Q5,6.5 2,8 Z" fill="#EF6A32"/>
  <path d="M10.5,2 Q14,3.5 18.5,1.5 L17.2,8.5 Q13.5,10 9.3,8.5 Z" fill="#7BC83F"/>
  <path d="M1.8,9 Q5,7.5 8.1,9 L7,15.5 Q3.5,14 0.6,15.5 Z" fill="#4D9CE8"/>
  <path d="M9.1,9.5 Q13,11 17,9.2 L15.8,16 Q12,17.5 8,16 Z" fill="#F6C523"/>
</svg>
<div class="t" style="left:35px;top:999px;font-size:17px;line-height:20px;font-weight:bold;font-style:italic;color:#fff;letter-spacing:0.1px;text-shadow:1px 1px 1px #1B4A17">Start</div>
<!-- quick launch -->
<svg class="i" style="left:111px;top:1001px" width="16" height="16" viewBox="0 0 16 16">
  <rect x="1" y="1" width="14" height="14" rx="3" fill="#fff" stroke="#2C5BB8" stroke-width="1.2"/>
  <circle cx="8" cy="8.5" r="4.5" fill="none" stroke="#1F6BD6" stroke-width="2"/><path d="M6,8 L10,8" stroke="#1F6BD6" stroke-width="2"/>
  <circle cx="13" cy="4" r="1.5" fill="#E33"/>
</svg>
<svg class="i" style="left:134px;top:1004px" width="17" height="10" viewBox="0 0 17 10">
  <path d="M1,3 L3,1 L14,1 L16,3 L16,8 L1,8Z" fill="#D8D8D8" stroke="#555" stroke-width=".7"/><rect x="1" y="6" width="15" height="2.5" fill="#666"/>
</svg>
<svg class="i" style="left:157px;top:1000px" width="17" height="17" viewBox="0 0 17 17"><text x="8.5" y="14" font-family="Liberation Sans" font-weight="bold" font-size="16" fill="#3AA6F2" stroke="#0B3A8E" stroke-width=".7" text-anchor="middle">e</text><path d="M1.5,14.5 Q3,5 15.5,2" stroke="#E9BC3C" stroke-width="1.8" fill="none"/><path d="M1.5,14.5 Q3,5 15.5,2" stroke="#8A6A1A" stroke-width=".5" fill="none" transform="translate(.8,.8)"/></svg>
<svg class="i" style="left:180px;top:1001px" width="17" height="17" viewBox="0 0 17 17">
  <rect x="1" y="1" width="12" height="12" rx="3" fill="#F4D7A8" stroke="#D9A560" stroke-width=".7"/>
  <circle cx="9.5" cy="9.5" r="6" fill="#FBD67A" stroke="#C98E2E" stroke-width=".7"/><path d="M6.5,8.5 L9.5,11.5 L12.5,8.5" stroke="#8A6410" stroke-width="1.3" fill="none"/>
</svg>
<svg class="i" style="left:203px;top:1001px" width="16" height="17" viewBox="0 0 16 17">
  <rect x="0" y="0.5" width="16" height="16" fill="#111"/><rect x="4" y="2.5" width="8" height="12" fill="#8D86E8"/>
  <path d="M2,1.5 L2,16 M14,1.5 L14,16" stroke="#fff" stroke-width="1" stroke-dasharray="1,1.2"/>
</svg>
<svg class="i" style="left:235px;top:1001px" width="9" height="7" viewBox="0 0 9 7"><path d="M1,1 L3.5,3.5 L1,6 M5,1 L7.5,3.5 L5,6" stroke="#A8CBF7" stroke-width="1.3" fill="none"/></svg>
<!-- task buttons -->
<div class="tbtn" style="left:251px;width:79px"><div class="t">chra...</div></div>
<svg class="i" style="left:260px;top:1001px" width="16" height="16" viewBox="0 0 16 16"><path d="M3,1 L12,1 L15,4 L15,15 L3,15Z" fill="#fff" stroke="#7A8AA8" stroke-width=".8"/><rect x="0.5" y="3.5" width="10" height="8" fill="#fff" stroke="#1A3C8C" stroke-width=".9"/><path d="M2,5 L3.5,10 L5.5,6 L7.5,10 L9,5" stroke="#1A3C8C" stroke-width="1.1" fill="none"/><path d="M5,13 L13,13" stroke="#8A9AB8"/></svg>
<div class="tbtn" style="left:331px;width:79px"><div class="t">{Y:\...</div></div>
<svg class="i" style="left:340px;top:1001px" width="16" height="16" viewBox="0 0 16 16"><rect x="1" y="1" width="6" height="13" fill="#1E3FA8" stroke="#0B1E63" stroke-width=".8"/><rect x="9" y="1" width="6" height="13" fill="#1E3FA8" stroke="#0B1E63" stroke-width=".8"/><path d="M2.5,4 L5.5,4 M2.5,6.5 L5.5,6.5 M2.5,9 L5.5,9 M10.5,4 L13.5,4 M10.5,6.5 L13.5,6.5 M10.5,9 L13.5,9" stroke="#9CC2F5" stroke-width="1"/><path d="M0,15.5 L16,15.5" stroke="#1DA0A0" stroke-width="1"/></svg>
<div class="tbtn" style="left:411px;width:79px"><div class="t">Wind...</div></div>
<svg class="i" style="left:420px;top:1001px" width="16" height="16" viewBox="0 0 16 16"><rect x="1.5" y="1.5" width="10" height="10" rx="2" fill="none" stroke="#D77A3A" stroke-width="2.2"/><rect x="5" y="5" width="10" height="10" rx="2" fill="none" stroke="#C9693A" stroke-width="2.2"/></svg>
<div class="tbtn" style="left:491px;width:79px"><div class="t">True...</div></div>
<svg class="i" style="left:500px;top:1001px" width="17" height="17" viewBox="0 0 17 17"><text x="8.5" y="14" font-family="Liberation Sans" font-weight="bold" font-size="16" fill="#3AA6F2" stroke="#0B3A8E" stroke-width=".7" text-anchor="middle">e</text><path d="M1.5,14.5 Q3,5 15.5,2" stroke="#E9BC3C" stroke-width="1.8" fill="none"/><path d="M1.5,14.5 Q3,5 15.5,2" stroke="#8A6A1A" stroke-width=".5" fill="none" transform="translate(.8,.8)"/></svg>
<div class="tbtn" style="left:571px;width:79px"><div class="t">Cent...</div></div>
<svg class="i" style="left:580px;top:1001px" width="16" height="16" viewBox="0 0 16 16"><circle cx="8" cy="8" r="7" fill="#fff" stroke="#1B4FB5" stroke-width="1"/><circle cx="8" cy="8" r="5.5" fill="#2D6ADB"/><text x="8" y="12" font-family="Liberation Sans" font-weight="bold" font-size="10" fill="#fff" text-anchor="middle">?</text></svg>
<div class="tbtn" style="left:651px;width:79px"><div class="t">1 Při...</div></div>
<svg class="i" style="left:661px;top:1001px" width="14" height="16" viewBox="0 0 14 16"><path d="M7,2 Q3,2 3,7 L2,11 L12,11 L11,7 Q11,2 7,2Z" fill="#F4D26A" stroke="#B58B22" stroke-width=".8"/><circle cx="7" cy="13" r="1.6" fill="#C89A2A"/></svg>
<div class="tbtn" style="left:731px;width:79px;background:linear-gradient(#1A48AC 0,#1E52B7 4px,#1F54BA 20px,#2258C0 26px);box-shadow:inset 1px 1px 2px rgba(0,0,40,.5)"><div class="t" style="top:7px;left:29px">data...</div></div>
<svg class="i" style="left:741px;top:1003px" width="17" height="12" viewBox="0 0 17 12"><path d="M1,5.5 L7,2 L16.5,4 L10.5,7.5Z" fill="#E4E4E4" stroke="#8C8C8C" stroke-width=".6"/>
    <path d="M3.5,5.3 L7.5,3.2 L13,4.4 L9,6.6Z" fill="#fff"/>
    <path d="M1,5.5 L10.5,7.5 L10.5,11 L1,9Z" fill="#5E5E5E"/>
    <path d="M10.5,7.5 L16.5,4 L16.5,7.5 L10.5,11Z" fill="#9A9A9A"/>
    <path d="M7,8.3 L9,8.7" stroke="#2A2A2A" stroke-width="1"/></svg>
<!-- search -->
<div class="a" style="left:820px;top:997px;width:217px;height:21px;background:#fff;border:1px solid #6F93DE;border-right:none"></div>
<div class="t" style="left:825px;top:1002px;color:#A0A0A0">Hledat v počítači</div>
<div class="a" style="left:1037px;top:997px;width:24px;height:21px;background:linear-gradient(#F4F4F4,#DCDCDC);border:1px solid #A8B8D8"></div>
<svg class="i" style="left:1042px;top:1000px" width="15" height="15" viewBox="0 0 15 15"><path d="M2,13 L6,9" stroke="#2A4F9A" stroke-width="2.4" stroke-linecap="round"/><circle cx="9" cy="6" r="4.2" fill="#DCEEFF" stroke="#2A4F9A" stroke-width="1.6"/></svg>
<div class="a" style="left:1079px;top:1000px;width:19px;height:19px;background:#2D5FD6"></div>
<div class="t" style="left:1081px;top:1003px;color:#fff">CS</div>
<!-- tray -->
<div class="a" style="left:1115px;top:994px;width:165px;height:30px;background:linear-gradient(#0B4FA8 0,#0B4FA8 1px,#28B0FA 1px,#1CA5F6 4px,#1296EE 14px,#0F8FEA 24px,#0B7DD8 30px);border-left:1px solid #0B3A9A"></div>
<svg class="i" style="left:1106px;top:1000px" width="19" height="19" viewBox="0 0 19 19"><defs><radialGradient id="trc" cx="30%" cy="30%" r="75%"><stop offset="0" stop-color="#8AD3FB"/><stop offset=".5" stop-color="#3A9CF0"/><stop offset="1" stop-color="#1468D8"/></radialGradient></defs><circle cx="9.5" cy="9.5" r="8.8" fill="url(#trc)" stroke="#0A3B9E" stroke-width="1"/><path d="M15.5,5 A8,8 0 0 1 5,16.5" stroke="#CDEBFF" stroke-width="1" fill="none"/><path d="M11.5,5 L7,9.5 L11.5,14" stroke="#fff" stroke-width="2.4" fill="none"/></svg>
<svg class="i" style="left:1127px;top:999px" width="17" height="18" viewBox="0 0 17 18"><path d="M2,16 L7,11" stroke="#2F5EAA" stroke-width="2.4" stroke-linecap="round"/><circle cx="11" cy="6.5" r="5" fill="#E8F4FF" stroke="#8FB3D8" stroke-width="1.2"/></svg>
<svg class="i" style="left:1146px;top:999px" width="16" height="18" viewBox="0 0 16 18"><circle cx="6" cy="3.5" r="2.5" fill="#E8C08A"/><rect x="2.5" y="6" width="7" height="8" fill="#3A9A3A"/><rect x="3" y="13" width="6" height="4" fill="#333"/><circle cx="11.5" cy="13.5" r="3.5" fill="#fff" stroke="#333" stroke-width=".8"/></svg>
<svg class="i" style="left:1162px;top:1000px" width="17" height="17" viewBox="0 0 17 17"><rect x="1" y="1" width="12" height="12" rx="3" fill="#F4D7A8" stroke="#D9A560" stroke-width=".7"/><circle cx="9.5" cy="9.5" r="6" fill="#FBD67A" stroke="#C98E2E" stroke-width=".7"/><path d="M6.5,8.5 L9.5,11.5 L12.5,8.5" stroke="#8A6410" stroke-width="1.3" fill="none"/></svg>
<svg class="i" style="left:1182px;top:1001px" width="16" height="15" viewBox="0 0 16 15"><path d="M8,2 L2,12 L14,12Z" stroke="#19B319" stroke-width="1.4" fill="none"/><circle cx="8" cy="2.5" r="2" fill="#19B319"/><circle cx="2.5" cy="12" r="2" fill="#19B319"/><circle cx="13.5" cy="12" r="2" fill="#19B319"/></svg>
<svg class="i" style="left:1200px;top:1000px" width="18" height="16" viewBox="0 0 18 16"><rect x="1" y="4" width="9" height="7" fill="#5C7DB8" stroke="#2A3E70" stroke-width=".8"/><rect x="3" y="12" width="5" height="3" fill="#AAB"/><path d="M12,3 Q14,6 12,9 M14,1 Q17,6 14,11" stroke="#fff" stroke-width="1" fill="none"/></svg>
<svg class="i" style="left:1217px;top:1000px" width="14" height="17" viewBox="0 0 14 17"><path d="M7,1 L13,3 L13,9 Q13,14 7,16 Q1,14 1,9 L1,3Z" fill="#C8202A" stroke="#7A0E14" stroke-width=".8"/><path d="M4.5,6 L9.5,11 M9.5,6 L4.5,11" stroke="#fff" stroke-width="1.6"/></svg>
<div class="t" style="left:1241px;top:1003px;color:#fff">8:42</div>

</body></html>
